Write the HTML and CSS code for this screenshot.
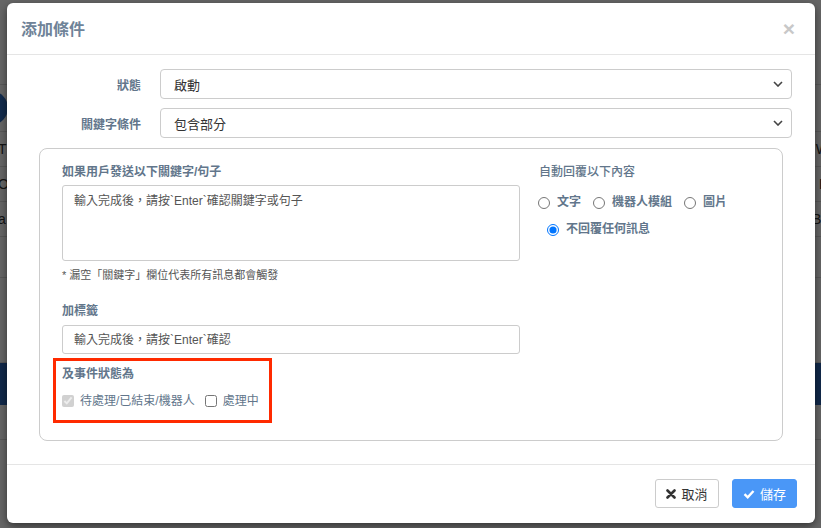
FILE: index.html
```html
<!DOCTYPE html>
<html lang="zh-Hant">
<head>
    <meta charset="UTF-8">
    <title>添加條件</title>
    <link rel="stylesheet" href="styles.css">
</head>
<body>

    <!-- page behind the dialog -->
    <div class="page">
        <div class="page-row row-top"></div>
        <div class="page-row row-nav"><span class="nav-dot"></span></div>
        <div class="page-row"><span class="cell-l">T</span><span class="cell-r">W</span></div>
        <div class="page-row"><span class="cell-l">O</span><span class="cell-r">D</span></div>
        <div class="page-row"><span class="cell-l">a</span><span class="cell-r">Bo</span></div>
        <div class="page-row row-empty"></div>
        <div class="page-row row-tall"></div>
        <div class="page-band"></div>
        <div class="page-row"></div>
    </div>
    <div class="backdrop"></div>

    <div class="modal">
        <div class="modal-header">
            <h4 class="modal-title">添加條件</h4>
            <span class="close">&times;</span>
        </div>

        <div class="modal-body">
            <div class="form-row">
                <label class="form-label">狀態</label>
                <div class="select">
                    <span>啟動</span>
                    <svg class="chevron" viewBox="0 0 10 6" width="10" height="6"><path d="M1 1l4 4 4-4" fill="none" stroke="#444" stroke-width="1.6"/></svg>
                </div>
            </div>
            <div class="form-row">
                <label class="form-label">關鍵字條件</label>
                <div class="select">
                    <span>包含部分</span>
                    <svg class="chevron" viewBox="0 0 10 6" width="10" height="6"><path d="M1 1l4 4 4-4" fill="none" stroke="#444" stroke-width="1.6"/></svg>
                </div>
            </div>

            <div class="panel">
                <div class="col-left">
                    <div class="field-title">如果用戶發送以下關鍵字/句子</div>
                    <div class="textarea">輸入完成後，請按`Enter`確認關鍵字或句子</div>
                    <div class="help">* 漏空「關鍵字」欄位代表所有訊息都會觸發</div>

                    <div class="field-title tag-title">加標籤</div>
                    <div class="input">輸入完成後，請按`Enter`確認</div>

                    <div class="mark-box">
                        <div class="field-title">及事件狀態為</div>
                        <div class="checks">
                            <label class="check"><input type="checkbox" checked disabled>待處理/已結束/機器人</label>
                            <label class="check"><input type="checkbox">處理中</label>
                        </div>
                    </div>
                </div>

                <div class="col-right">
                    <div class="field-title light">自動回覆以下內容</div>
                    <div class="radios">
                        <label class="radio"><input type="radio" name="reply">文字</label>
                        <label class="radio"><input type="radio" name="reply">機器人模組</label>
                        <label class="radio"><input type="radio" name="reply">圖片</label>
                    </div>
                    <div class="radios second">
                        <label class="radio"><input type="radio" name="reply" checked>不回覆任何訊息</label>
                    </div>
                </div>
            </div>
        </div>

        <div class="modal-footer">
            <button class="btn btn-default">
                <svg viewBox="0 0 10 10" width="10" height="10"><path d="M1.5 1.5l7 7M8.5 1.5l-7 7" stroke="#333" stroke-width="2.6" stroke-linecap="round"/></svg>
                取消
            </button>
            <button class="btn btn-primary">
                <svg viewBox="0 0 12 10" width="12" height="10"><path d="M1.5 5.2l3.2 3.1 5.8-6.3" fill="none" stroke="#fff" stroke-width="2.4"/></svg>
                儲存
            </button>
        </div>
    </div>

</body>
</html>
```

FILE: styles.css
```css
body {
    margin: 0;
    width: 821px;
    height: 528px;
    overflow: hidden;
    position: relative;
    font-family: "Liberation Sans", "Noto Sans CJK TC", sans-serif;
    font-size: 12px;
    background: #fff;
}

/* page behind */
.page-row {
    height: 34px;
    border-bottom: 1px solid #ddd;
    display: flex;
    justify-content: space-between;
    align-items: center;
    font-size: 14px;
    color: #333;
}
.row-top {
    height: 84px;
}
.row-nav {
    height: 46px;
}
.nav-dot {
    display: block;
    width: 34px;
    height: 34px;
    margin-left: -26px;
    border-radius: 50%;
    background: #2f6bbf;
}
.cell-l {
    margin-left: -2px;
}
.cell-r {
    margin-right: -8px;
}
.row-empty {
    height: 40px;
}
.row-tall {
    height: 84px;
}
.page-band {
    height: 42px;
    background: #2c66b8;
}
.backdrop {
    position: absolute;
    inset: 0;
    background: rgba(0, 0, 0, 0.6);
}

/* dialog */
.modal {
    position: absolute;
    left: 7px;
    top: 3px;
    width: 808px;
    height: 520px;
    background: #fff;
    border-radius: 6px;
    box-shadow: 0 3px 9px rgba(0, 0, 0, 0.5);
    display: flex;
    flex-direction: column;
}
.modal-header {
    height: 52px;
    box-sizing: border-box;
    border-bottom: 1px solid #e5e5e5;
    padding: 0 20px 0 14px;
    display: flex;
    align-items: center;
    justify-content: space-between;
}
.modal-title {
    margin: 0;
    font-size: 16px;
    font-weight: bold;
    color: #6f8398;
    line-height: 20px;
    padding-top: 2px;
}
.close {
    font-size: 21px;
    font-weight: bold;
    color: #c8c8c8;
    line-height: 20px;
}

.modal-body {
    padding: 14px 23px 23px 16px;
}
.form-row {
    display: flex;
    align-items: center;
    margin-bottom: 9px;
}
.form-label {
    width: 118px;
    margin-right: 19px;
    text-align: right;
    font-weight: bold;
    color: #62768b;
    font-size: 12px;
}
.select {
    flex: 1;
    height: 30px;
    box-sizing: border-box;
    border: 1px solid #ccc;
    border-radius: 4px;
    padding: 0 8px 0 13px;
    display: flex;
    align-items: center;
    justify-content: space-between;
    font-size: 13px;
    color: #333;
}
.chevron {
    display: block;
}

.panel {
    margin: 10px 9px 0 16px;
    border: 1px solid #ccc;
    border-radius: 8px;
    padding: 15px 22px 17px 22px;
    display: flex;
    gap: 19px;
}
.col-left {
    width: 458px;
}
.col-right {
    flex: 1;
}
.field-title {
    font-weight: bold;
    color: #62768b;
    line-height: 16px;
}
.field-title.light {
    font-weight: 500;
}
.textarea,
.input {
    border: 1px solid #ccc;
    border-radius: 3px;
    color: #555;
    line-height: 14px;
    padding: 8px 11px;
}
.textarea {
    margin-top: 5px;
    height: 58px;
}
.input {
    margin-top: 6px;
    height: 11px;
    line-height: 12px;
}
.help {
    margin-top: 7px;
    font-size: 11px;
    color: #555;
    line-height: 14px;
}
.tag-title {
    margin-top: 21px;
}

.mark-box {
    margin: 4px 0 0 -9px;
    width: 207px;
    border: 3px solid #ff2a00;
    padding: 5px 0 11px 6px;
}
.checks {
    margin-top: 11px;
    display: flex;
    gap: 10px;
}
.check,
.radio {
    display: flex;
    align-items: center;
    color: #62768b;
    line-height: 16px;
}
.check input {
    width: 12px;
    height: 12px;
    margin: 0 6px 0 0;
}
.radios {
    margin-top: 14px;
    display: flex;
    gap: 12px;
    margin-left: -1px;
}
.radios.second {
    margin-top: 11px;
    margin-left: 8px;
}
.radio {
    font-weight: bold;
}
.radio input {
    width: 12px;
    height: 12px;
    margin: 2px 7px 0 0;
}

.modal-footer {
    margin-top: auto;
    border-top: 1px solid #e5e5e5;
    padding: 14px 18px 15px;
    display: flex;
    justify-content: flex-end;
    gap: 13px;
}
.btn {
    height: 29px;
    width: 64px;
    border-radius: 3px;
    font-family: inherit;
    font-size: 13px;
    display: flex;
    align-items: center;
    justify-content: center;
    gap: 5px;
    padding: 0;
}
.btn-default {
    background: #fff;
    border: 1px solid #ccc;
    color: #333;
}
.btn-primary {
    width: 65px;
    background: #4a97f7;
    border: 1px solid #4a97f7;
    color: #fff;
}
```
